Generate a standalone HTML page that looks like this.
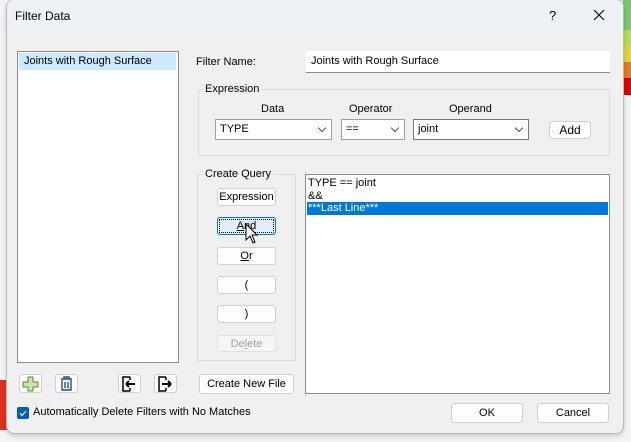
<!DOCTYPE html>
<html><head><style>
*{box-sizing:border-box;margin:0;padding:0}
body{width:631px;height:442px;overflow:hidden;background:#f4f4f4;font-family:"Liberation Sans",sans-serif;font-size:11px;color:#000;position:relative}
.a{position:absolute}
.dlg{left:7px;top:0;width:616px;height:433px;background:#f0f0f0;border-radius:7px;box-shadow:0 0 0 1px #b8b8b8,0 2px 6px rgba(0,0,0,.25);overflow:hidden}
.tb{left:0;top:0;width:100%;height:31px;background:#eef2f7}
.btn{position:absolute;background:#fdfdfd;border:1px solid #d0d0d0;border-radius:3px;text-align:center;line-height:17px}
.wb{position:absolute;background:#fff;border:1px solid #8c8c95}
.grp{position:absolute;border:1px solid #dcdcdc}
.lbl{position:absolute;background:#f0f0f0;padding:0 2px}
.dd{position:absolute;background:#fff;border:1px solid #a0a0a0;padding-left:4px;line-height:19px}
.dd::after{content:"";position:absolute;right:6px;top:5px;width:5px;height:5px;border-right:1px solid #555;border-bottom:1px solid #555;transform:rotate(45deg)}
</style></head><body>
<div class="a" style="left:623px;top:0;width:8px;height:30px;background:#7cc86c"></div>
<div class="a" style="left:623px;top:30px;width:8px;height:16px;background:#b6de52"></div>
<div class="a" style="left:623px;top:46px;width:8px;height:16px;background:#e6d433"></div>
<div class="a" style="left:623px;top:62px;width:8px;height:16px;background:#e67b1e"></div>
<div class="a" style="left:623px;top:78px;width:8px;height:17px;background:#e00000"></div>
<div class="a" style="left:0;top:380px;width:10px;height:50px;background:#e03020"></div>
<div class="dlg a">
<div class="a tb"></div>
<div class="a" style="left:8px;top:9px;font-size:12px">Filter Data</div>
<div class="a" style="left:542px;top:8px;font-size:13px">?</div>
<svg class="a" style="left:586px;top:9px" width="12" height="12"><path d="M1 1L11 11M11 1L1 11" stroke="#000" stroke-width="1.1"/></svg>

<div class="wb" style="left:10px;top:51px;width:162px;height:312px"></div>
<div class="a" style="left:12px;top:53px;width:157px;height:17px;background:#cce8ff;padding-left:5px;line-height:17px">Joints with Rough Surface</div>

<div class="a" style="left:189px;top:56px">Filter Name:</div>
<div class="a" style="left:299px;top:51px;width:304px;height:22px;background:#fff;border-bottom:1px solid #8c8c8c;padding-left:5px;line-height:20px">Joints with Rough Surface</div>

<div class="grp" style="left:191px;top:89px;width:412px;height:67px"></div>
<div class="lbl" style="left:196px;top:83px">Expression</div>
<div class="a" style="left:254px;top:103px">Data</div>
<div class="a" style="left:342px;top:103px">Operator</div>
<div class="a" style="left:442px;top:103px">Operand</div>
<div class="dd" style="left:208px;top:119px;width:117px;height:21px">TYPE</div>
<div class="dd" style="left:334px;top:119px;width:64px;height:21px">==</div>
<div class="dd" style="left:406px;top:119px;width:116px;height:21px;border-color:#777">joint</div>
<div class="btn" style="left:542px;top:121px;width:42px;height:18px;font-size:12px">Add</div>

<div class="grp" style="left:190px;top:174px;width:99px;height:187px"></div>
<div class="lbl" style="left:196px;top:168px">Create Query</div>
<div class="btn" style="left:210px;top:188px;width:59px;height:18px">Expression</div>
<div class="btn" style="left:210px;top:217px;width:59px;height:18px;background:#e0eef9;border:1px solid #0078d4;outline:1px dotted #000;outline-offset:-3px"><u>A</u>nd</div>
<div class="btn" style="left:210px;top:247px;width:59px;height:18px"><u>O</u>r</div>
<div class="btn" style="left:210px;top:276px;width:59px;height:18px">(</div>
<div class="btn" style="left:210px;top:305px;width:59px;height:18px">)</div>
<div class="btn" style="left:210px;top:335px;width:59px;height:17px;color:#a0a0a0;background:#f5f5f5;border-color:#e0e0e0">De<u>l</u>ete</div>
<svg class="a" style="left:238px;top:223px" width="14" height="22" viewBox="0 0 14 22"><path d="M1 1V17L5 13L8 20L10 19L7 12H12Z" fill="#fff" stroke="#000" stroke-width="1"/></svg>

<div class="wb" style="left:298px;top:174px;width:305px;height:220px"></div>
<div class="a" style="left:301px;top:177px;line-height:13px">TYPE == joint<br>&amp;&amp;</div>
<div class="a" style="left:300px;top:202px;width:301px;height:13px;background:#0078d7;color:#fff;padding-left:1px;line-height:13px">***Last Line***</div>

<div class="btn" style="left:12px;top:374px;width:23px;height:19px"></div>
<svg class="a" style="left:15px;top:376px" width="17" height="16"><path d="M6 1H11V6H16V11H11V15H6V11H1V6H6Z" fill="#c7e6a6" stroke="#5a8a3a"/></svg>
<div class="btn" style="left:48px;top:374px;width:23px;height:19px"></div>
<svg class="a" style="left:51px;top:375px" width="17" height="17"><path d="M3 4H14M6 4V2H11V4M4 5V15H13V5M7 7V13M10 7V13" fill="none" stroke="#1a4f8a" stroke-width="1.4"/></svg>
<div class="btn" style="left:111px;top:374px;width:23px;height:19px"></div>
<svg class="a" style="left:114px;top:376px" width="17" height="16"><path d="M9 1H2V15H9M9 1V4M9 15V12" fill="none" stroke="#000" stroke-width="1.5"/><path d="M5 8H14M5 8L8 5M5 8L8 11" fill="none" stroke="#000" stroke-width="2"/></svg>
<div class="btn" style="left:147px;top:374px;width:23px;height:19px"></div>
<svg class="a" style="left:150px;top:376px" width="17" height="16"><path d="M9 1H2V15H9M9 1V4M9 15V12" fill="none" stroke="#000" stroke-width="1.5"/><path d="M5 8H14M14 8L11 5M14 8L11 11" fill="none" stroke="#000" stroke-width="2"/></svg>
<div class="btn" style="left:192px;top:374px;width:95px;height:20px;line-height:18px">Create New File</div>

<div class="a" style="left:10px;top:407px;width:12px;height:12px;background:#005fb8;border-radius:2px"></div>
<svg class="a" style="left:10px;top:407px" width="12" height="12"><path d="M3 6L5 8.5L9 4" fill="none" stroke="#fff" stroke-width="1.2"/></svg>
<div class="a" style="left:26px;top:406px">Automatically Delete Filters with No Matches</div>

<div class="btn" style="left:444px;top:403px;width:72px;height:20px;line-height:18px">OK</div>
<div class="btn" style="left:530px;top:403px;width:72px;height:20px;line-height:18px">Cancel</div>
</div>
</body></html>
